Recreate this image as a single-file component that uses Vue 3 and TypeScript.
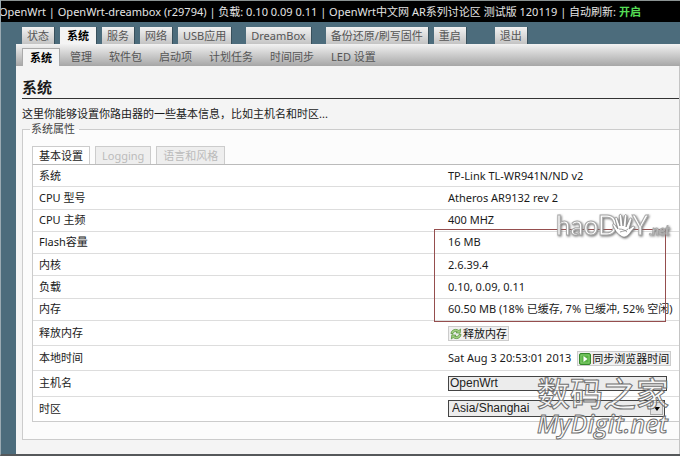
<script setup lang="ts">
import { ref } from 'vue'

interface Tab {
  label: string
  active?: boolean
  spaced?: string
}

const mainTabs: Tab[] = [
  { label: '状态' },
  { label: '系统', active: true },
  { label: '服务' },
  { label: '网络' },
  { label: 'USB应用' },
  { label: 'DreamBox', spaced: 'gap-small' },
  { label: '备份还原/刷写固件', spaced: 'gap-small' },
  { label: '重启' },
  { label: '退出', spaced: 'gap-large' },
]

const subTabs: Tab[] = [
  { label: '系统', active: true },
  { label: '管理' },
  { label: '软件包' },
  { label: '启动项' },
  { label: '计划任务' },
  { label: '时间同步' },
  { label: 'LED 设置' },
]

const panelTabs: Tab[] = [
  { label: '基本设置', active: true },
  { label: 'Logging' },
  { label: '语言和风格' },
]

const facts: [string, string][] = [
  ['系统', 'TP-Link TL-WR941N/ND v2'],
  ['CPU 型号', 'Atheros AR9132 rev 2'],
  ['CPU 主频', '400 MHZ'],
  ['Flash容量', '16 MB'],
  ['内核', '2.6.39.4'],
  ['负载', '0.10, 0.09, 0.11'],
  ['内存', '60.50 MB (18% 已缓存, 7% 已缓冲, 52% 空闲)'],
]

const hostname = ref('OpenWrt')
const zone = ref('Asia/Shanghai')
</script>

<template>
  <div class="page">
    <header class="status">
      OpenWrt | OpenWrt-dreambox (r29794) | 负载: 0.10 0.09 0.11 | OpenWrt中文网 AR系列讨论区 测试版 120119 | 自动刷新: <a href="#">开启</a>
    </header>
    <nav class="main-tabs">
      <a v-for="t in mainTabs" :key="t.label" href="#" :class="[t.spaced, { active: t.active }]">{{ t.label }}</a>
    </nav>
    <div class="body">
      <nav class="sub-tabs">
        <a v-for="t in subTabs" :key="t.label" href="#" :class="{ active: t.active }">{{ t.label }}</a>
      </nav>
      <main>
        <h1>系统</h1>
        <p class="intro">这里你能够设置你路由器的一些基本信息，比如主机名和时区...</p>
        <fieldset>
          <legend>系统属性</legend>
          <nav class="panel-tabs">
            <a v-for="t in panelTabs" :key="t.label" href="#" :class="{ active: t.active }">{{ t.label }}</a>
          </nav>
          <div class="sheet">
            <table>
              <tbody>
                <tr v-for="[name, value] in facts" :key="name">
                  <th scope="row">{{ name }}</th>
                  <td>{{ value }}</td>
                </tr>
                <tr class="tall">
                  <th scope="row">释放内存</th>
                  <td>
                    <button type="button">
                      <svg width="12" height="12" viewBox="0 0 13 12" aria-hidden="true">
                        <path d="M1 5.5C1.4 2.6 3.5 1 6.2 1c1.4 0 2.500.4 3.400 1.200L11.500.6 11 5.200 6.400 4.700 7.900 3.500C6.200 2.600 4 3.300 3.300 5.500z" fill="#a5d284" stroke="#4f8f33" stroke-width=".8" />
                        <path d="M12 6.500C11.600 9.400 9.500 11 6.800 11c-1.400 0-2.500-.4-3.400-1.200L1.500 11.400 2 6.800l4.600.5L5.100 8.500C6.800 9.400 9 8.700 9.700 6.500z" fill="#a5d284" stroke="#4f8f33" stroke-width=".8" />
                      </svg>
                      释放内存
                    </button>
                  </td>
                </tr>
                <tr class="tall">
                  <th scope="row">本地时间</th>
                  <td>
                    <span class="clock">Sat Aug 3 20:53:01 2013</span>
                    <button type="button">
                      <svg width="12" height="12" viewBox="0 0 12 12" aria-hidden="true">
                        <rect x=".5" y=".5" width="11" height="11" rx="1.500" fill="#58b344" stroke="#35862b" />
                        <rect x="2" y="2" width="8" height="8" fill="none" stroke="#91d47d" stroke-width=".7" />
                        <path d="M4.500 3v6l4-3z" fill="#fff" />
                      </svg>
                      同步浏览器时间
                    </button>
                  </td>
                </tr>
                <tr class="tall">
                  <th scope="row"><label for="hostname">主机名</label></th>
                  <td><input id="hostname" v-model="hostname" type="text" /></td>
                </tr>
                <tr class="tall">
                  <th scope="row"><label for="zone">时区</label></th>
                  <td>
                    <span class="picker">
                      <select id="zone" v-model="zone">
                        <option>Asia/Shanghai</option>
                      </select>
                      <span class="arrow"><svg width="6" height="4" viewBox="0 0 6 4" aria-hidden="true"><path d="M0 0h6L3 4z" /></svg></span>
                    </span>
                  </td>
                </tr>
              </tbody>
            </table>
            <div class="highlight"></div>
          </div>
        </fieldset>
      </main>
    </div>

    <svg class="mark-hao" width="124" height="34" viewBox="0 0 124 34" aria-hidden="true">
      <text x="1" y="24" font-size="26">haoD</text>
      <g class="hand">
        <path d="M66 25C62 23 60 19 58 15c-1-2 1-3 2-1l3 4-3-10c-.6-2 1.600-2.600 2.300-.6L65 15l-.8-10c-.2-2.200 2.200-2.200 2.500 0L68 15l1.400-10c.3-2 2.600-1.800 2.400.3L71 16l3.400-8c.8-1.800 2.800-1 2.200.9L74 18l3.500-2.500c1.700-1 2.700.5 1.500 1.700C75 21 74 25 70 26c-1.500.3-3-.3-4-1z" />
        <path d="M64 18c3 0 6 1 8 3M65 21c3-1 6-1 8-3" />
      </g>
      <text x="77" y="24" font-size="26">Y</text>
      <text x="94" y="24" font-size="13" font-style="italic">.net</text>
    </svg>
    <div class="mark-digit" aria-hidden="true">
      <div class="cn">数码之家</div>
      <div class="en">MyDigit.net</div>
    </div>
  </div>
</template>

<style>
body {
  margin: 0;
  background: #4c6c7c;
}
</style>

<style scoped>
* {
  box-sizing: border-box;
}
.page {
  position: relative;
  overflow: hidden;
  min-height: 100vh;
  display: flex;
  flex-direction: column;
  border-left: 1px solid #9aaab2;
  border-bottom: 2px solid #55585a;
  background: #4c6c7c;
  color: #1a1a1a;
  font: 11px/16px "Noto Sans", "Noto Sans CJK SC", sans-serif;
}
a {
  color: inherit;
  text-decoration: none;
}
.status {
  height: 22px;
  line-height: 21px;
  border-top: 1px solid #8b9393;
  background: #000;
  color: #e4e4e4;
  white-space: nowrap;
  margin-left: -2px;
}
.status a {
  color: #55dd55;
  font-weight: bold;
}
.main-tabs {
  display: flex;
  align-items: flex-end;
  gap: 5px;
  height: 22px;
  padding-left: 21px;
  white-space: nowrap;
}
.main-tabs a {
  height: 17px;
  line-height: 17px;
  padding: 0 5px;
  background: linear-gradient(#f2f2f2, #c4c4c4);
  color: #555;
  border-right: 1px solid #38505c;
}
.main-tabs a.active {
  padding: 0 7px;
  background: #f4f4f4;
  color: #000;
  font-weight: bold;
}
.main-tabs .gap-small {
  margin-left: 9px;
}
.main-tabs .gap-large {
  margin-left: 23px;
}
.body {
  flex: 1;
  display: flex;
  flex-direction: column;
  margin-left: 15px;
  background: #f4f4f4;
}
.sub-tabs {
  display: flex;
  align-items: flex-end;
  gap: 3px;
  height: 22px;
  padding-left: 6px;
  background: linear-gradient(#f2f2f2, #a6a6a6);
  color: #555;
}
.sub-tabs a {
  height: 18px;
  line-height: 17px;
  padding: 0 7px;
}
.sub-tabs a.active {
  background: #f4f4f4;
  color: #000;
  font-weight: bold;
  border: 1px solid #aaa;
  border-bottom: 0;
}
main {
  flex: 1;
  padding: 11px 0 0 6px;
  border-right: 1px solid #c4c4c4;
}
h1 {
  margin: 0;
  height: 22px;
  font-size: 15px;
  line-height: 20px;
  border-bottom: 1px solid #333;
}
.intro {
  margin: 7px 0 0;
  height: 16px;
}
fieldset {
  margin: 0;
  padding: 0 0 17px 9px;
  min-width: 0;
  border: 1px solid #ccc;
  border-right: 0;
  background: #fcfcfc;
}
legend {
  margin-left: -2px;
  padding: 0 4px 0 1px;
  line-height: 14px;
  color: #444;
}
.panel-tabs {
  display: flex;
  gap: 5px;
  margin-top: 10px;
  line-height: 17px;
}
.panel-tabs a {
  height: 18px;
  padding: 0 6px;
  border: 1px solid #ccc;
  border-bottom: 0;
  background: #eee;
  color: #bbb;
}
.panel-tabs a.active {
  background: #fff;
  color: #222;
}
.sheet {
  position: relative;
}
table {
  width: 100%;
  height: 258px;
  table-layout: fixed;
  border-collapse: separate;
  border-spacing: 0;
  border-top: 1px solid #bbb;
  border-left: 1px solid #ccc;
  background: #fff;
}
th,
td {
  height: 22px;
  padding: 0 0 0 8px;
  border-bottom: 1px solid #ddd;
  text-align: left;
  font-weight: normal;
  white-space: nowrap;
}
th {
  width: 63%;
  padding-left: 6px;
}
.tall th,
.tall td {
  height: 25px;
}
tr:last-child th,
tr:last-child td {
  border-bottom-color: #ccc;
}
.clock {
  margin-right: 6px;
}
button {
  display: inline-flex;
  align-items: center;
  gap: 1px;
  height: 15px;
  padding: 0 1px;
  border: 1px solid #ccc;
  background: #f0f0f0;
  color: #111;
  font: inherit;
  line-height: 13px;
  vertical-align: middle;
}
input,
select {
  display: block;
  width: 100%;
  border: 1px solid #444;
  border-radius: 0;
  background: #ececec;
  color: #222;
  font: 12px/13px "Liberation Sans", sans-serif;
}
input {
  width: calc(100% - 12px);
  height: 15px;
  padding: 0 1px;
}
.picker {
  position: relative;
  display: block;
  width: calc(100% - 14px);
}
select {
  appearance: none;
  height: 17px;
  padding: 0 3px;
}
.arrow {
  position: absolute;
  top: 2px;
  right: 2px;
  bottom: 2px;
  width: 13px;
  display: grid;
  place-items: center;
  border: 1px solid #aaa;
  background: #e4e4e4;
  pointer-events: none;
}
.highlight {
  position: absolute;
  left: 402px;
  top: 65px;
  width: 232px;
  height: 93px;
  border: 1px solid #954e4e;
}
.mark-hao {
  position: absolute;
  left: 554px;
  top: 211px;
  overflow: visible;
  font-family: Lato, sans-serif;
  fill: #fff;
  stroke: #aaa;
  stroke-width: 1;
  filter: drop-shadow(1px 1px 1px #777);
  pointer-events: none;
}
.hand {
  stroke: #888;
  stroke-width: 0.8;
}
.mark-digit {
  position: absolute;
  left: 536px;
  top: 374px;
  color: rgba(255, 255, 255, 0.5);
  -webkit-text-stroke: 1px #707070;
  white-space: nowrap;
  pointer-events: none;
}
.cn {
  font: 500 33px/36px "Noto Sans CJK SC", sans-serif;
}
.en {
  font: italic 600 25px/26px "Open Sans", sans-serif;
}
</style>
